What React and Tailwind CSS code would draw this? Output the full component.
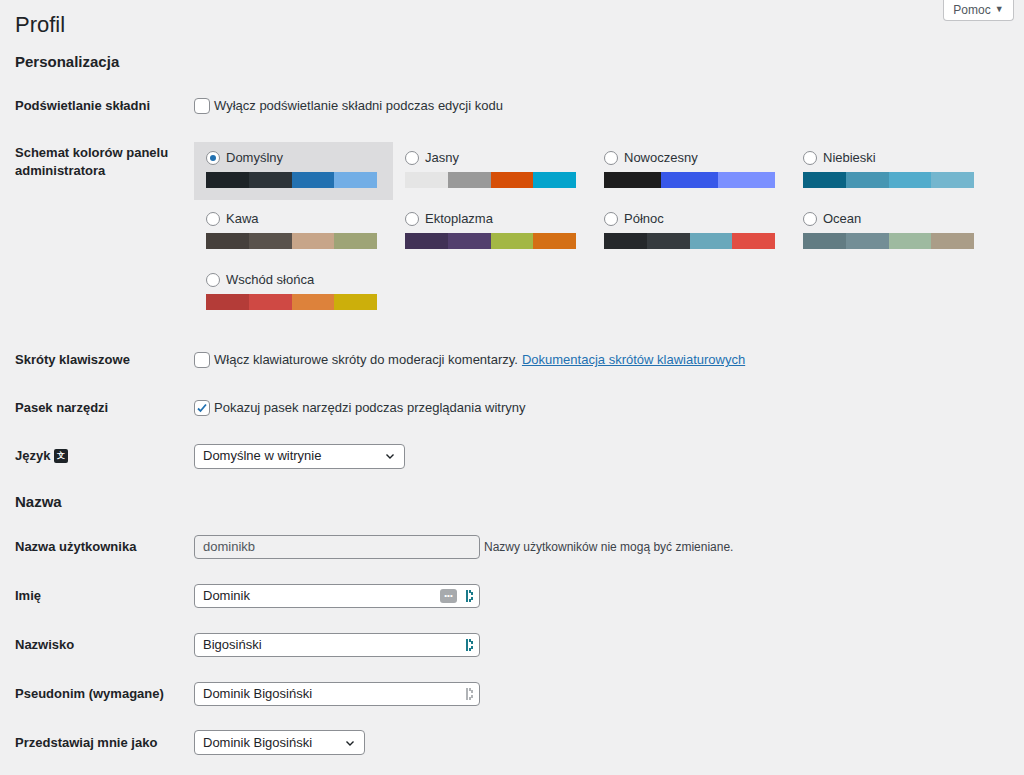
import React from "react";

const schemes = [
  ["Domyślny", ["#1d2327", "#2c3338", "#2271b1", "#72aee6"], true],
  ["Jasny", ["#e5e5e5", "#999999", "#d64e07", "#04a4cc"]],
  ["Nowoczesny", ["#1e1e1e", "#3858e9", "#7b90ff"]],
  ["Niebieski", ["#096484", "#4796b3", "#52accc", "#74b6ce"]],
  ["Kawa", ["#46403c", "#59524c", "#c7a589", "#9ea476"]],
  ["Ektoplazma", ["#413256", "#523f6d", "#a3b745", "#d46f15"]],
  ["Północ", ["#25282b", "#363b3f", "#69a8bb", "#e14d43"]],
  ["Ocean", ["#627c83", "#738e96", "#9ebaa0", "#aa9d88"]],
  ["Wschód słońca", ["#b43c38", "#cf4944", "#dd823b", "#ccaf0b"]],
];

const Check = ({ checked }) => (
  <span className="w-4 h-4 border border-[#8c8f94] rounded-[4px] bg-white flex items-center justify-center shrink-0">
    {checked && (
      <svg width="14" height="14" viewBox="0 0 14 14"><path d="M3 7.5l2.5 2.5L11 3.5" stroke="#2271b1" strokeWidth="1.8" fill="none" /></svg>
    )}
  </span>
);

const Chevron = () => (
  <svg width="12" height="12" viewBox="0 0 12 12"><path d="M2.5 4.5L6 8l3.5-3.5" stroke="#1d2327" strokeWidth="1.4" fill="none" /></svg>
);

const Bt = ({ c }) => (
  <svg width="10" height="14" viewBox="0 0 10 14">
    <rect x="1" y="1" width="2" height="12" fill={c} />
    <rect x="4" y="1" width="2" height="3" fill={c} />
    <rect x="6" y="3" width="2" height="3" fill={c} />
    <rect x="6" y="8" width="2" height="3" fill={c} />
    <rect x="4" y="10" width="2" height="3" fill={c} />
  </svg>
);

const Row = ({ label, h, children }) => (
  <div className={`flex items-center ${h}`}>
    <div className="w-[179px] font-bold text-[13px] leading-[18px]">{label}</div>
    <div className="flex-1">{children}</div>
  </div>
);

export default function App() {
  return (
    <div className="h-[775px] overflow-hidden bg-[#f0f0f1] text-[#1d2327] text-[13px] px-[15px] relative" style={{ fontFamily: '"Liberation Sans", Arial, sans-serif' }}>
      <div className="absolute right-[10px] top-0 bg-white border border-[#c3c4c7] border-t-0 rounded-b h-[21px] w-[71px] flex items-center justify-center gap-1 text-[12px] text-[#50575e]">
        Pomoc <span className="text-[9px]">▼</span>
      </div>
      <h1 className="text-[22px] font-normal pt-[10px] leading-[30px]">Profil</h1>
      <h2 className="text-[15px] font-bold mt-[12px] leading-[20px]">Personalizacja</h2>
      <div className="mt-[14px]">
        <Row label="Podświetlanie składni" h="h-[40px]">
          <label className="flex items-center gap-[4px] text-[#2c3338]"><Check />Wyłącz podświetlanie składni podczas edycji kodu</label>
        </Row>
        <div className="flex mt-[16px]">
          <div className="w-[179px] font-bold leading-[18px] pt-[2px]">Schemat kolorów panelu<br />administratora</div>
          <div className="grid grid-cols-[199px_199px_199px_199px] gap-y-[3px]">
            {schemes.map(([n, cols, sel]) => (
              <div key={n} className={`h-[58px] px-[12px] pt-[8px] ${sel ? "bg-[#dcdcde]" : ""}`}>
                <div className="flex items-center gap-[6px] h-[16px] text-[#2c3338]">
                  <span className="w-[14px] h-[14px] rounded-full border border-[#8c8f94] bg-white flex items-center justify-center">
                    {sel && <span className="w-[6px] h-[6px] rounded-full bg-[#2271b1]" />}
                  </span>
                  {n}
                </div>
                <div className="flex w-[171px] h-[16px] mt-[6px]">
                  {cols.map((c, i) => <div key={i} className="flex-1" style={{ background: c }} />)}
                </div>
              </div>
            ))}
          </div>
        </div>
        <div className="mt-[18px]">
          <Row label="Skróty klawiszowe" h="h-[40px]">
            <label className="flex items-center gap-[4px] text-[#2c3338]"><Check />Włącz klawiaturowe skróty do moderacji komentarzy. <span className="text-[#2271b1] underline">Dokumentacja skrótów klawiaturowych</span></label>
          </Row>
          <Row label="Pasek narzędzi" h="h-[48px] mt-[4px]">
            <label className="flex items-center gap-[4px] text-[#2c3338]"><Check checked />Pokazuj pasek narzędzi podczas przeglądania witryny</label>
          </Row>
          <Row label={<span className="flex items-center gap-1">Język <span className="inline-flex w-[14px] h-[14px] bg-[#1d2327] text-white text-[8px] items-center justify-center rounded-[2px] font-bold">文</span></span>} h="h-[48px]">
            <div className="w-[211px] h-[25px] bg-white border border-[#8c8f94] rounded-[4px] flex items-center justify-between px-[8px]">Domyślne w witrynie <Chevron /></div>
          </Row>
        </div>
      </div>
      <h2 className="text-[15px] font-bold mt-[12px] leading-[20px]">Nazwa</h2>
      <div className="mt-[10px]">
        <Row label="Nazwa użytkownika" h="h-[49px]">
          <div className="flex items-center gap-[4px]">
            <div className="w-[286px] h-[24px] bg-[#f0f0f1] border border-[#8c8f94] rounded-[4px] px-[8px] flex items-center text-[#50575e]">dominikb</div>
            <span className="text-[12px] text-[#3c434a]">Nazwy użytkowników nie mogą być zmieniane.</span>
          </div>
        </Row>
        <Row label="Imię" h="h-[49px]">
          <div className="w-[286px] h-[24px] bg-white border border-[#8c8f94] rounded-[4px] pl-[8px] pr-[4px] flex items-center justify-between">Dominik
            <span className="flex items-center gap-[8px]"><span className="w-[17px] h-[14px] bg-[#a7aaad] rounded-[3px] text-white text-[8px] flex items-center justify-center leading-none">•••</span><Bt c="#1a7a8a" /></span>
          </div>
        </Row>
        <Row label="Nazwisko" h="h-[49px]">
          <div className="w-[286px] h-[24px] bg-white border border-[#8c8f94] rounded-[4px] pl-[8px] pr-[4px] flex items-center justify-between">Bigosiński<Bt c="#1a7a8a" /></div>
        </Row>
        <Row label="Pseudonim (wymagane)" h="h-[49px]">
          <div className="w-[286px] h-[24px] bg-white border border-[#8c8f94] rounded-[4px] pl-[8px] pr-[4px] flex items-center justify-between">Dominik Bigosiński<Bt c="#b0b3b6" /></div>
        </Row>
        <Row label="Przedstawiaj mnie jako" h="h-[49px]">
          <div className="w-[171px] h-[25px] bg-white border border-[#8c8f94] rounded-[4px] flex items-center justify-between px-[8px]">Dominik Bigosiński <Chevron /></div>
        </Row>
      </div>
    </div>
  );
}
